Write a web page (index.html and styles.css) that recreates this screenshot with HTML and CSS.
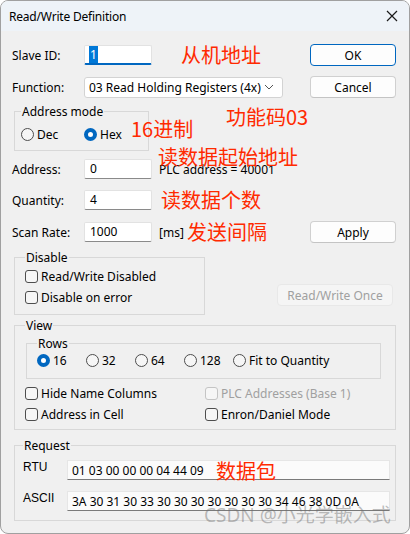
FILE: index.html
```html
<!DOCTYPE html>
<html lang="en">
<head>
    <meta charset="UTF-8">
    <title>Read/Write Definition</title>
    <link rel="stylesheet" href="styles.css">
</head>
<body>
    <div class="window">
        <div class="titlebar">
            <span>Read/Write Definition</span>
            <svg class="close" width="12" height="12" viewBox="0 0 12 12">
                <path d="M1 1 L11 11 M11 1 L1 11" stroke="#1a1a1a" stroke-width="1.2" fill="none"/>
            </svg>
        </div>

        <div class="content">
            <div class="row row-slave">
                <span class="lbl">Slave ID:</span>
                <div class="input focused"><span class="selected">1</span></div>
                <button class="btn btn-default">OK</button>
            </div>

            <div class="row row-function">
                <span class="lbl">Function:</span>
                <div class="select">
                    <span>03 Read Holding Registers (4x)</span>
                    <svg width="10" height="6" viewBox="0 0 10 6"><path d="M1 1 L5 5 L9 1" stroke="#555" fill="none"/></svg>
                </div>
                <button class="btn">Cancel</button>
            </div>

            <fieldset class="group group-mode">
                <legend>Address mode</legend>
                <div class="radios">
                    <label class="radio w63"><span class="circle"></span>Dec</label>
                    <label class="radio"><span class="circle on"></span>Hex</label>
                </div>
            </fieldset>

            <div class="row row-address">
                <span class="lbl">Address:</span>
                <div class="input">0</div>
                <span class="note">PLC address = 40001</span>
            </div>

            <div class="row row-quantity">
                <span class="lbl">Quantity:</span>
                <div class="input">4</div>
            </div>

            <div class="row row-scan">
                <span class="lbl">Scan Rate:</span>
                <div class="input">1000</div>
                <span class="note">[ms]</span>
                <button class="btn">Apply</button>
            </div>

            <div class="disable-row">
                <fieldset class="group group-disable">
                    <legend>Disable</legend>
                    <label class="check"><span class="box"></span>Read/Write Disabled</label>
                    <label class="check"><span class="box"></span>Disable on error</label>
                </fieldset>
                <button class="btn btn-disabled">Read/Write Once</button>
            </div>

            <fieldset class="group group-view">
                <legend>View</legend>
                <fieldset class="group group-rows">
                    <legend>Rows</legend>
                    <div class="radios">
                        <label class="radio w49"><span class="circle on"></span>16</label>
                        <label class="radio w49"><span class="circle"></span>32</label>
                        <label class="radio w49"><span class="circle"></span>64</label>
                        <label class="radio w49"><span class="circle"></span>128</label>
                        <label class="radio"><span class="circle"></span>Fit to Quantity</label>
                    </div>
                </fieldset>
                <div class="checks">
                    <label class="check"><span class="box"></span>Hide Name Columns</label>
                    <label class="check disabled"><span class="box"></span>PLC Addresses (Base 1)</label>
                    <label class="check"><span class="box"></span>Address in Cell</label>
                    <label class="check"><span class="box"></span>Enron/Daniel Mode</label>
                </div>
            </fieldset>

            <fieldset class="group group-request">
                <legend>Request</legend>
                <div class="req-row">
                    <span class="req-lbl">RTU</span>
                    <div class="req-field">01 03 00 00 00 04 44 09</div>
                </div>
                <div class="req-row">
                    <span class="req-lbl">ASCII</span>
                    <div class="req-field">3A 30 31 30 33 30 30 30 30 30 30 30 34 46 38 0D 0A</div>
                </div>
            </fieldset>
        </div>

        <!-- annotations drawn over the dialog -->
        <span class="mark" style="left:180px; top:42px;">从机地址</span>
        <span class="mark" style="left:225px; top:104px;">功能码03</span>
        <span class="mark" style="left:130px; top:116px;">16进制</span>
        <span class="mark" style="left:157px; top:144px;">读数据起始地址</span>
        <span class="mark" style="left:160px; top:187px;">读数据个数</span>
        <span class="mark" style="left:186px; top:219px;">发送间隔</span>
        <span class="mark" style="left:215px; top:458px;">数据包</span>
        <span class="watermark">CSDN @小光学嵌入式</span>
    </div>
</body>
</html>
```

FILE: styles.css
```css
html, body {
    margin: 0;
    padding: 0;
    background: #ffffff;
}

body {
    font-family: "Segoe UI", "Noto Sans", "Noto Sans CJK SC", sans-serif;
    font-size: 12px;
    color: #000;
}

.window {
    position: relative;
    width: 410px;
    height: 534px;
    box-sizing: border-box;
    border: 1px solid #a0a0a0;
    border-radius: 8px;
    background: #f0f0f0;
    overflow: hidden;
}

.titlebar {
    height: 30px;
    background: #eef3f8;
    display: flex;
    align-items: center;
    justify-content: space-between;
    padding: 0 11px 0 8px;
    letter-spacing: -0.2px;
}

.content {
    padding: 0 13px 0 11px;
}

.row {
    display: flex;
    align-items: center;
}

.lbl {
    width: 72px;
}

.input {
    width: 68px;
    height: 20px;
    box-sizing: border-box;
    background: #fff;
    border: 1px solid #e2e2e2;
    border-bottom-color: #8a8a8a;
    border-radius: 2px;
    padding: 0 5px;
    line-height: 18px;
}

.input.focused {
    border-bottom: 2px solid #0067c0;
    padding-left: 4px;
}

.selected {
    background: #0078d7;
    color: #fff;
    padding: 0 1px;
}

.note {
    margin-left: 7px;
}

.btn {
    margin-left: auto;
    width: 86px;
    height: 22px;
    font: inherit;
    background: #fdfdfd;
    border: 1px solid #d0d0d0;
    border-bottom-color: #c4c4c4;
    border-radius: 4px;
    padding: 0;
}

.btn-default {
    border: 1px solid #0067c0;
}

.btn-disabled {
    width: 116px;
    margin-right: 3px;
    background: #f5f5f5;
    border-color: #e8e8e8;
    color: #a0a0a0;
}

.row-slave {
    margin-top: 13px;
    height: 22px;
}

.row-function {
    margin-top: 10px;
    height: 22px;
}

.select {
    width: 199px;
    height: 21px;
    box-sizing: border-box;
    background: #fff;
    border: 1px solid #d3d3d3;
    border-radius: 3px;
    display: flex;
    align-items: center;
    justify-content: space-between;
    padding: 0 8px 0 4px;
}

.group {
    margin: 0;
    padding: 0 6px;
    border: 1px solid #d8d8d8;
    min-width: 0;
}

.group legend {
    padding: 0 1px;
    line-height: 15px;
}

.group-mode {
    margin-left: 2px;
    width: 135px;
    box-sizing: border-box;
    margin-top: 6px;
    padding-bottom: 7px;
}

.radios {
    display: flex;
    align-items: center;
    margin-top: 7px;
}

.radio {
    display: flex;
    align-items: center;
}

.w63 {
    width: 63px;
}

.w49 {
    width: 49px;
}

.circle {
    width: 13px;
    height: 13px;
    box-sizing: border-box;
    border: 1px solid #4d4d4d;
    border-radius: 50%;
    margin-right: 3px;
    background: #f6f6f6;
}

.circle.on {
    border: 4px solid #0067c0;
    background: #fff;
}

.row-address {
    margin-top: 8px;
    height: 20px;
}

.row-quantity {
    margin-top: 11px;
    height: 20px;
}

.row-scan {
    margin-top: 11px;
    height: 22px;
}

.disable-row {
    display: flex;
    align-items: flex-end;
    justify-content: space-between;
    margin-top: 7px;
}

.group-disable {
    margin-left: 2px;
    width: 191px;
    box-sizing: border-box;
    padding: 0 10px 9px;
}

.group-disable .check {
    margin-top: 4px;
}

.group-disable .check + .check {
    margin-top: 6px;
}

.disable-row .btn {
    margin-bottom: 9px;
}

.check {
    display: flex;
    align-items: center;
    height: 15px;
}

.box {
    width: 13px;
    height: 13px;
    box-sizing: border-box;
    border: 1px solid #4d4d4d;
    border-radius: 3px;
    margin-right: 3px;
    background: #f6f6f6;
}

.check.disabled {
    color: #a0a0a0;
}

.check.disabled .box {
    border-color: #c4c4c4;
}

.group-view {
    margin: 3px 0 0 2px;
    padding: 0 10px 7px;
}

.group-rows {
    margin: 3px 4px 0 1px;
    padding: 0 10px 9px;
}

.group-rows legend {
    padding: 0 1px;
}

.group-rows .radios {
    margin-top: 1px;
}

.checks {
    display: grid;
    grid-template-columns: 180px 1fr;
    row-gap: 6px;
    margin-top: 7px;
}

.group-request {
    margin: 8px 0 0 2px;
    padding: 0 5px 9px 8px;
}

.req-row {
    display: flex;
    align-items: flex-start;
    margin-top: 7px;
}

.req-row + .req-row {
    margin-top: 11px;
}

.req-lbl {
    width: 44px;
    line-height: 14px;
    font-family: "Liberation Sans", "Noto Sans", sans-serif;
    font-size: 12px;
}

.req-field {
    flex: 1;
    height: 20px;
    box-sizing: border-box;
    background: #fbfbfb;
    border: 1px solid #e6e6e6;
    border-bottom-color: #7a7a7a;
    padding: 0 4px;
    line-height: 20px;
}

.mark {
    position: absolute;
    font-family: "Noto Sans CJK SC", sans-serif;
    font-size: 20px;
    line-height: 24px;
    color: #ff2a00;
    white-space: nowrap;
}

.watermark {
    position: absolute;
    left: 203px;
    top: 502px;
    font-family: "Noto Sans", "Noto Sans CJK SC", sans-serif;
    font-size: 19px;
    line-height: 24px;
    color: rgba(110, 110, 110, 0.45);
    white-space: nowrap;
}
```
